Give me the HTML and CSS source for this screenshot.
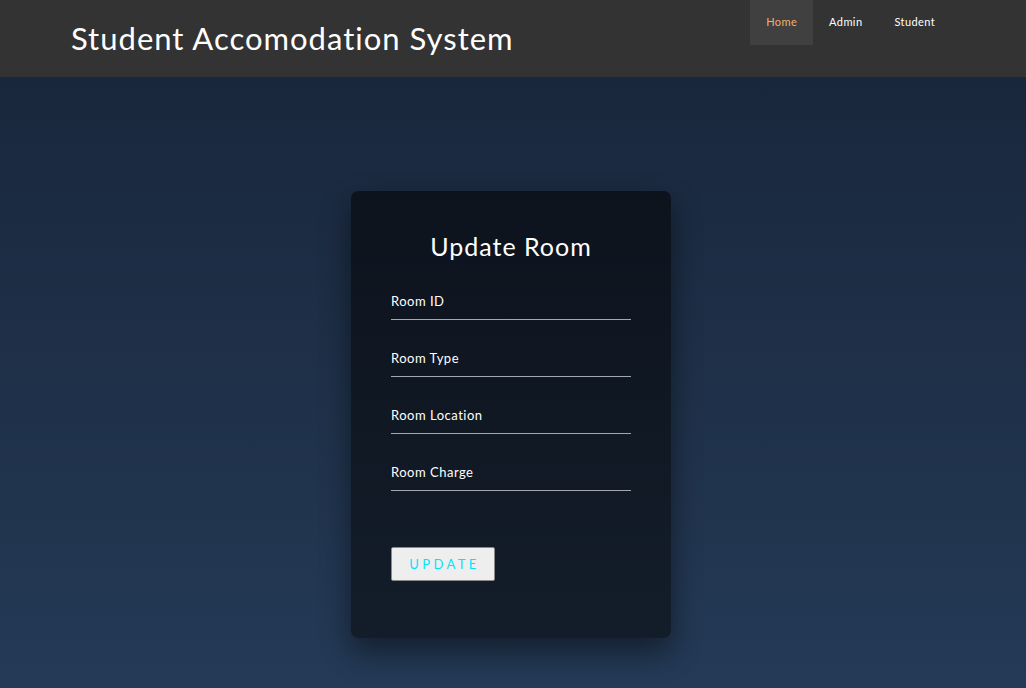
FILE: index.html
```html
<!DOCTYPE html>
<html>
<head>
<meta charset="utf-8">
<title>Student Accomodation System</title>
<link rel="stylesheet" href="styles.css">
</head>
<body>
<header class="topbar">
  <h1 class="brand">Student Accomodation System</h1>
  <nav class="nav">
    <a class="nav-item active" href="#">Home</a>
    <a class="nav-item" href="#">Admin</a>
    <a class="nav-item" href="#">Student</a>
  </nav>
</header>
<main class="main">
  <form class="card">
    <h2 class="card-title">Update Room</h2>
    <div class="field"><input type="text" placeholder="Room ID"></div>
    <div class="field"><input type="text" placeholder="Room Type"></div>
    <div class="field"><input type="text" placeholder="Room Location"></div>
    <div class="field"><input type="text" placeholder="Room Charge"></div>
    <button type="button" class="btn">UPDATE</button>
  </form>
</main>
</body>
</html>
```
FILE: styles.css
```css
* { box-sizing: border-box; }
html, body { margin: 0; padding: 0; height: 100%; }
body {
  font-family: "Lato", "Open Sans", sans-serif;
  background: linear-gradient(180deg, #18253a 0%, #1e2f47 50%, #243a56 100%);
  min-height: 688px;
  overflow: hidden;
}
.topbar {
  height: 77px;
  background: #333333;
  display: flex;
  justify-content: space-between;
  align-items: flex-start;
  padding: 0 75px 0 71px;
}
.brand {
  margin: 19px 0 0 0;
  font-weight: 400;
  font-size: 31px;
  line-height: 38px;
  color: #ffffff;
  letter-spacing: 1px;
}
.nav { display: flex; }
.nav-item {
  display: block;
  height: 45px;
  line-height: 44px;
  padding: 0 16px;
  font-size: 11px;
  letter-spacing: 0.4px;
  color: #ffffff;
  text-decoration: none;
}
.nav-item.active { background: #404040; color: #f6ae6b; }
.main {
  display: flex;
  justify-content: center;
  padding-top: 114px;
}
.card {
  width: 320px;
  height: 447px;
  margin-right: 4px;
  border-radius: 7px;
  background: linear-gradient(180deg, #0d131d 0%, #131d2a 100%);
  box-shadow: 0 14px 30px rgba(0, 0, 0, 0.45);
  padding: 40px 40px 0 40px;
  display: flex;
  flex-direction: column;
}
.card-title {
  margin: 0;
  text-align: center;
  font-weight: 400;
  font-size: 25px;
  line-height: 31px;
  letter-spacing: 1px;
  color: #ffffff;
}
.field { margin-top: 22px; height: 35px; }
.field:first-of-type { margin-top: 23px; }
.field input {
  width: 100%;
  height: 35px;
  background: transparent;
  border: none;
  border-bottom: 1px solid #a3a8ae;
  padding: 0 0 2px 0;
  color: #ffffff;
  font-family: inherit;
  font-size: 13px;
  letter-spacing: 0.5px;
  outline: none;
}
.field input::placeholder { color: #ffffff; opacity: 1; }
.btn {
  align-self: flex-start;
  margin-top: 56px;
  width: 104px;
  height: 34px;
  background: #eeeeee;
  border: 1px solid #8a8a8a;
  border-radius: 2px;
  color: #00e5ff;
  font-family: inherit;
  font-size: 13px;
  letter-spacing: 3.4px;
  padding: 0 0 0 3px;
}
```
